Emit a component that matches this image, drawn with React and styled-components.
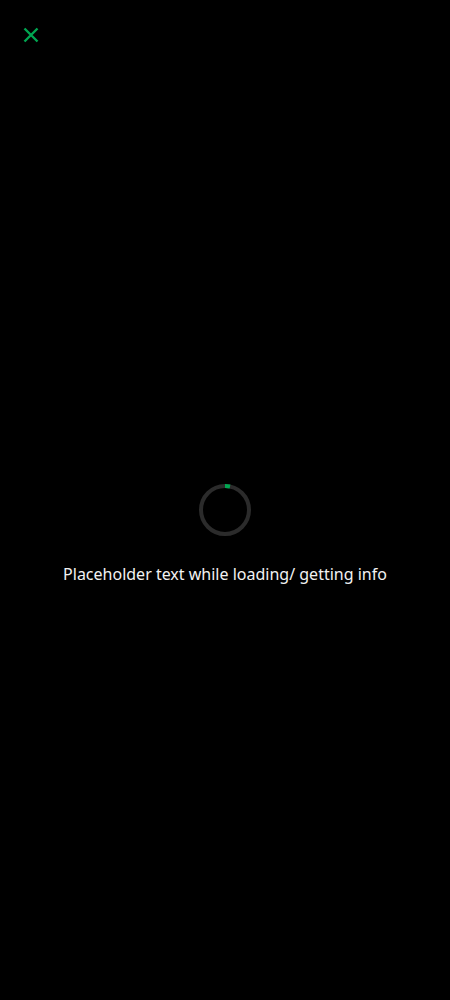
import React from "react";
import styled, { createGlobalStyle } from "styled-components";

const GlobalStyle = createGlobalStyle`
  html, body {
    margin: 0;
    padding: 0;
    background: #000;
  }
  body {
    font-family: "Noto Sans", "Liberation Sans", sans-serif;
  }
`;

const Screen = styled.div`
  min-height: 100vh;
  background: #000;
  display: flex;
  flex-direction: column;
`;

const TopBar = styled.header`
  height: 70px;
  display: flex;
  align-items: center;
  padding-left: 17px;
`;

const CloseButton = styled.button`
  width: 28px;
  height: 28px;
  padding: 0;
  border: none;
  background: transparent;
  display: flex;
  align-items: center;
  justify-content: center;
  cursor: pointer;
`;

const Loading = styled.main`
  display: flex;
  flex-direction: column;
  align-items: center;
  padding-top: 414px;
`;

const Spinner = styled.svg`
  width: 52px;
  height: 52px;
  display: block;
`;

const Message = styled.p`
  margin: 26px 0 0;
  color: #f2f2f2;
  font-size: 16px;
  line-height: 24px;
  text-align: center;
`;

const App = () => {
  return (
    <>
      <GlobalStyle />
      <Screen>
        <TopBar>
          <CloseButton aria-label="Close">
            <svg width="16" height="16" viewBox="0 0 16 16">
              <path
                d="M1.5 1.5 L14.5 14.5 M14.5 1.5 L1.5 14.5"
                stroke="#00a651"
                strokeWidth="2.4"
                fill="none"
              />
            </svg>
          </CloseButton>
        </TopBar>
        <Loading>
          <Spinner viewBox="0 0 52 52">
            <circle cx="26" cy="26" r="24" stroke="#2b2b2b" strokeWidth="4" fill="none" />
            <path
              d="M26 2 A24 24 0 0 1 31 2.5"
              stroke="#00a651"
              strokeWidth="4"
              fill="none"
            />
          </Spinner>
          <Message>Placeholder text while loading/ getting info</Message>
        </Loading>
      </Screen>
    </>
  );
};

export default App;
